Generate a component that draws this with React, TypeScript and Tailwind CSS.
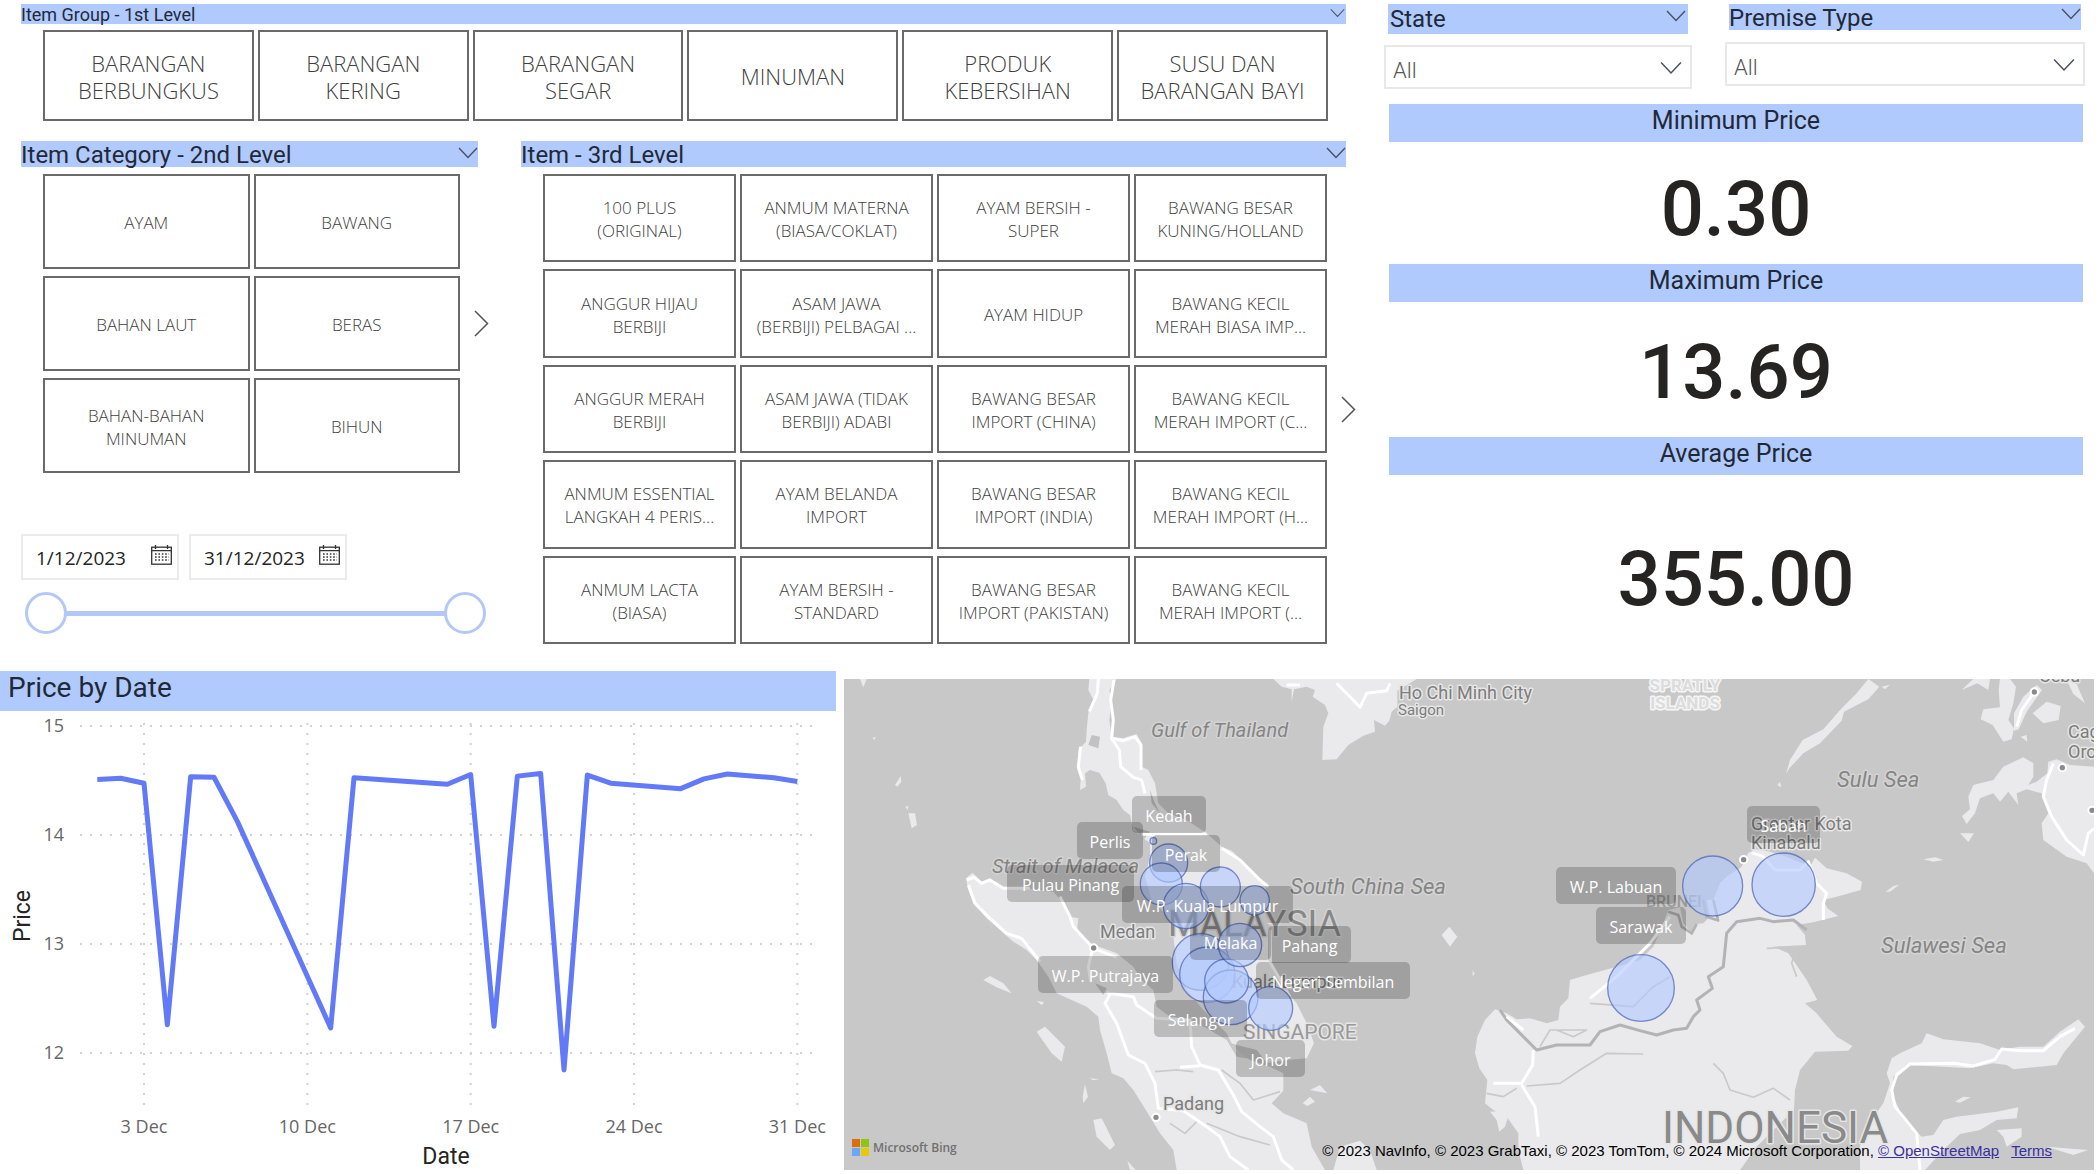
import { useState, type ReactNode } from "react";

const DIN = "font-['Roboto',sans-serif]";
const SEGOE = "font-['Open_Sans','Noto_Sans',sans-serif]";

const GROUPS = [
  "BARANGAN\nBERBUNGKUS",
  "BARANGAN\nKERING",
  "BARANGAN\nSEGAR",
  "MINUMAN",
  "PRODUK\nKEBERSIHAN",
  "SUSU DAN\nBARANGAN BAYI",
];

const CATEGORIES = ["AYAM", "BAWANG", "BAHAN LAUT", "BERAS", "BAHAN-BAHAN\nMINUMAN", "BIHUN"];

const ITEMS = [
  "100 PLUS\n(ORIGINAL)",
  "ANMUM MATERNA\n(BIASA/COKLAT)",
  "AYAM BERSIH -\nSUPER",
  "BAWANG BESAR\nKUNING/HOLLAND",
  "ANGGUR HIJAU\nBERBIJI",
  "ASAM JAWA\n(BERBIJI) PELBAGAI ...",
  "AYAM HIDUP",
  "BAWANG KECIL\nMERAH BIASA IMP...",
  "ANGGUR MERAH\nBERBIJI",
  "ASAM JAWA (TIDAK\nBERBIJI) ADABI",
  "BAWANG BESAR\nIMPORT (CHINA)",
  "BAWANG KECIL\nMERAH IMPORT (C...",
  "ANMUM ESSENTIAL\nLANGKAH 4 PERIS...",
  "AYAM BELANDA\nIMPORT",
  "BAWANG BESAR\nIMPORT (INDIA)",
  "BAWANG KECIL\nMERAH IMPORT (H...",
  "ANMUM LACTA\n(BIASA)",
  "AYAM BERSIH -\nSTANDARD",
  "BAWANG BESAR\nIMPORT (PAKISTAN)",
  "BAWANG KECIL\nMERAH IMPORT (...",
];

function ChevronDown({ className }: { className: string }) {
  return (
    <svg viewBox="0 0 20 12" className={className} fill="none" stroke="#4a5160" strokeWidth="1.4" aria-hidden="true">
      <path d="M1 1 L10 10.5 L19 1" />
    </svg>
  );
}

function NextButton({ label }: { label: string }) {
  return (
    <button type="button" aria-label={label} className="flex w-[15px] shrink-0 items-center">
      <svg viewBox="0 0 15 27" className="h-[27px] w-[15px]" fill="none" stroke="#555" strokeWidth="1.5" aria-hidden="true">
        <path d="M1 1 L13.5 13.5 L1 26" />
      </svg>
    </button>
  );
}

function Header({ children, className, chevron }: { children: ReactNode; className: string; chevron: string }) {
  return (
    <div className={`flex items-start justify-between bg-[#b1cafe] text-[#1f2937] ${DIN} ${className}`}>
      <h2>{children}</h2>
      <button type="button" aria-label="Expand filter">
        <ChevronDown className={chevron} />
      </button>
    </div>
  );
}

function Tile({ label, className }: { label: string; className: string }) {
  return (
    <button
      type="button"
      className={`flex items-center justify-center border-2 border-[#6a6a6a] bg-white pt-0.5 text-center whitespace-pre text-[#404040] ${SEGOE} font-light ${className}`}
    >
      {label}
    </button>
  );
}

function Calendar() {
  return (
    <svg viewBox="0 0 21 20" className="h-5 w-[21px]" fill="none" stroke="#333" strokeWidth="1.3" aria-hidden="true">
      <rect x="0.7" y="2.2" width="19.6" height="17" />
      <path d="M0.7 5.7 H20.3 M4.5 0 V4 M16.5 0 V4" />
      <path d="M4 9 H18 M4 12 H18 M4 15 H18" strokeDasharray="1.6 1.8" strokeWidth="1.5" />
    </svg>
  );
}

function DateBox({ label, value }: { label: string; value: string }) {
  return (
    <div className="flex h-[46px] w-[158px] items-center justify-between border-2 border-[#ebebeb] pr-[5px] pl-[13px]">
      <input
        type="text"
        aria-label={label}
        defaultValue={value}
        className={`w-[108px] bg-transparent pt-0.5 text-[19px] text-[#252423] outline-none ${SEGOE}`}
      />
      <button type="button" aria-label={`Pick ${label.toLowerCase()}`} className="mb-1">
        <Calendar />
      </button>
    </div>
  );
}

const THUMB =
  "pointer-events-none absolute inset-0 m-0 h-[42px] w-full appearance-none bg-transparent outline-none [&::-webkit-slider-thumb]:pointer-events-auto [&::-webkit-slider-thumb]:h-[42px] [&::-webkit-slider-thumb]:w-[42px] [&::-webkit-slider-thumb]:appearance-none [&::-webkit-slider-thumb]:rounded-full [&::-webkit-slider-thumb]:border-[3px] [&::-webkit-slider-thumb]:border-solid [&::-webkit-slider-thumb]:border-[#b3c8f8] [&::-webkit-slider-thumb]:bg-white";

function DateSlicer() {
  const [from, setFrom] = useState(1);
  const [to, setTo] = useState(31);
  return (
    <div className="mt-[61px]">
      <div className="flex gap-2.5">
        <DateBox label="Start date" value="1/12/2023" />
        <DateBox label="End date" value="31/12/2023" />
      </div>
      <div className="relative mt-3 mr-[3px] ml-1 flex h-[42px] items-center px-5">
        <div className="h-[5px] w-full bg-[#b3c8f8]" />
        <input type="range" min={1} max={31} value={from} aria-label="From day" onChange={(e) => setFrom(+e.target.value)} className={THUMB} />
        <input type="range" min={1} max={31} value={to} aria-label="To day" onChange={(e) => setTo(+e.target.value)} className={THUMB} />
      </div>
    </div>
  );
}

function Dropdown({ label }: { label: string }) {
  return (
    <div className="relative">
      <select
        aria-label={label}
        className={`h-[44px] w-full appearance-none border-2 border-[#e8e8e8] bg-white pt-1.5 pl-[7px] text-[22px] text-[#555] ${DIN} font-light`}
      >
        <option>All</option>
      </select>
      <ChevronDown className="pointer-events-none absolute top-4 right-2.5 h-3.5 w-[22px]" />
    </div>
  );
}

function Kpi({ title, value, className }: { title: string; value: string; className: string }) {
  return (
    <section className={DIN}>
      <h2 className="h-[38px] bg-[#b1cafe] text-center text-[25px] leading-[34px] text-[#1f2937]">{title}</h2>
      <p className={`flex items-center justify-center text-[76px] leading-none font-medium text-[#252423] ${className}`}>{value}</p>
    </section>
  );
}

/* Line chart: one day is 70/3 units wide, one price unit is 109 units high. */
const PRICES: [number, number][] = [
  [1, 14.51], [2, 14.52], [3, 14.475], [4, 12.26], [5, 14.535], [6, 14.53], [7, 14.125], [11, 12.23],
  [12, 14.525], [16, 14.465], [17, 14.555], [18, 12.245], [19, 14.54], [20, 14.565], [21, 11.845],
  [22, 14.55], [23, 14.475], [26, 14.425], [27, 14.515], [28, 14.56], [30, 14.525], [31, 14.49],
];
const dayX = (d: number) => 74 + (d * 70) / 3;
const priceY = (p: number) => 15 + (15 - p) * 109;

function PriceChart() {
  const points = PRICES.map(([d, p]) => `${dayX(d)},${priceY(p)}`).join(" ");
  return (
    <svg viewBox="0 0 836 463" className="block h-auto w-full" role="img" aria-label="Price by date">
      <g stroke="#d2d2d2" strokeWidth="2">
        {[15, 14, 13, 12].map((p) => (
          <line key={p} x1="80" x2="814" y1={priceY(p)} y2={priceY(p)} strokeDasharray="2 8" />
        ))}
        {[3, 10, 17, 24, 31].map((d) => (
          <line key={d} y1="12" y2="399" x1={dayX(d)} x2={dayX(d)} strokeDasharray="2 8" />
        ))}
      </g>
      <polyline points={points} fill="none" stroke="#6279f8" strokeWidth="5" strokeLinejoin="round" />
      <g className={SEGOE} fill="#666" fontSize="18">
        {[15, 14, 13, 12].map((p) => (
          <text key={p} x="64" y={priceY(p) + 6} textAnchor="end">{p}</text>
        ))}
        {[3, 10, 17, 24, 31].map((d) => (
          <text key={d} x={dayX(d)} y="422" textAnchor="middle">{d} Dec</text>
        ))}
      </g>
      <g className={DIN} fill="#252423" fontSize="23" textAnchor="middle">
        <text x="446" y="453">Date</text>
        <text transform="translate(30 205) rotate(-90)">Price</text>
      </g>
    </svg>
  );
}

const LAND = [
  "M748 27L745 60L760 90L745 130L740 180L738 215L715 240L712 300L722 330L720 360L738 350L735 310L750 300L778 308L797 340L805 375L830 390L850 420L870 435L880 480L905 500L930 520L930 560L915 620L935 690L985 740L1000 800L1010 880L1040 960L1090 1020L1160 1090L1180 1130L1230 1135L1270 1180L1340 1170L1400 1165L1422 1120L1400 1060L1370 1000L1320 940L1290 880L1295 800L1285 700L1275 640L1215 580L1175 542L1145 530L1100 490L1040 450L985 430L955 400L945 340L925 300L905 290L905 220L890 192L850 205L815 200L808 150L815 100L808 60L830 27Z",
  "M378 625L398 608L425 635L450 625L490 655L560 655L640 665L670 700L690 740L715 745L712 775L745 820L790 835L830 850L880 890L905 930L940 960L950 1010L990 1040L1050 1050L1100 1075L1160 1110L1190 1160L1250 1170L1330 1210L1330 1262L1295 1300L1330 1330L1400 1360L1415 1430L1455 1500L1010 1500L1000 1440L960 1390L930 1340L880 1260L850 1225L815 1210L800 1150L780 1080L775 1040L740 1010L650 970L625 920L590 870L560 840L520 815L480 780L440 745L400 700L385 660Z",
  "M1500 1430L1560 1412L1590 1440L1610 1500L1480 1500Z",
  "M590 1085L615 1070L675 1130L665 1175L635 1150Z M430 930L450 918L490 940L515 970L470 952Z M760 1350L785 1345L825 1425L810 1440L770 1400Z M735 1243L744 1280L730 1300L728 1280Z M205 430L225 430L231 465L215 475Z M590 993L612 996L606 1006Z M862 1472L887 1500L870 1500Z M60 27L80 27L70 52Z M748 1225L778 1227L760 1231Z M165 345L182 318L184 335L172 350Z M97 204L107 200L104 210Z M196 408L206 410L202 420Z",
  "M1300 27L1325 50L1355 58L1355 95L1362 58L1400 50L1425 60L1418 80L1455 105L1465 130L1450 170L1447 270L1490 268L1525 225L1570 197L1605 185L1602 150L1635 167L1648 152L1655 125L1672 110L1672 62L1730 27Z",
  "M1965 1018L1935 1050L1912 1100L1905 1150L1918 1195L1942 1230L1935 1300L1960 1320L2000 1340L2035 1390L2035 1440L2050 1500L2700 1500L2750 1430L2800 1380L2862 1320L2865 1260L2880 1200L2925 1145L3025 1142L3037 1128L2990 1100L2955 1060L2930 1030L2895 1000L2932 990L2900 930L2880 900L2845 850L2800 830L2898 825L2895 795L2870 765L2920 757L2995 738L2962 715L2950 690L2990 680L3062 660L3066 635L3020 610L2960 595L2925 563L2910 590L2840 560L2790 545L2750 538L2725 548L2705 590L2660 620L2640 640L2620 690L2600 690L2610 740L2590 760L2570 762L2555 790L2530 760L2520 712L2485 720L2470 760L2440 830L2400 870L2330 890L2240 915L2190 930L2185 985L2160 1010L2155 1050L2120 1060L2070 1045L2030 1048L2000 1030Z",
  "M1950 1325L1990 1322L2003 1345L1995 1370L1978 1385L1970 1350Z M1805 795L1828 770L1852 800L1830 830Z M1410 1260L1440 1245L1462 1270Z M1388 1300L1410 1280L1425 1295L1402 1308Z M1898 900L1904 912L1898 918Z",
  "M3085 27L3118 50L3085 88L3012 125L3005 152L2940 220L2890 250L2848 295L2838 312L2850 270L2888 210L2950 178L3000 120L3050 70Z M2812 345L2820 335L2824 352Z M3125 50L3150 44L3135 58Z",
  "M3480 27L3476 60L3480 112L3430 118L3422 148L3458 165L3490 215L3515 208L3522 175L3505 150L3520 100L3528 50L3510 27Z M3365 60L3400 27L3450 27L3445 60L3412 40Z M3578 130L3620 95L3662 108L3656 150L3610 160Z M3680 30L3710 42L3735 100L3700 72Z M3542 200L3560 195L3562 215Z",
  "M3522 182L3522 130L3550 80L3590 45L3606 60L3560 125L3536 178Z",
  "M3380 462L3366 438L3390 418L3385 380L3400 345L3460 330L3490 290L3550 262L3580 280L3580 320L3565 345L3590 335L3622 310L3625 275L3650 268L3690 285L3762 290L3762 610L3740 580L3680 560L3610 510L3605 460L3625 430L3605 370L3560 358L3530 370L3535 405L3505 365L3480 395L3460 370L3420 385L3405 430Z",
  "M3360 490L3402 490L3385 516Z M3250 568L3285 562L3310 570L3280 575Z M3137 665L3160 648L3178 644L3150 665Z M3345 1295L3370 1280L3392 1282L3360 1298Z M3470 1380L3545 1375L3545 1400L3500 1430L3490 1400Z M3620 1430L3745 1440L3700 1455Z",
  "M3715 1048L3660 1085L3610 1130L3540 1130L3480 1140L3420 1120L3310 1108L3260 1090L3245 1120L3180 1150L3155 1165L3140 1210L3150 1240L3130 1300L3080 1370L3060 1430L3060 1500L3255 1500L3310 1440L3360 1392L3420 1380L3470 1350L3530 1345L3535 1312L3470 1325L3350 1340L3310 1350L3280 1395L3245 1400L3190 1345L3160 1280L3160 1220L3200 1185L3310 1190L3390 1195L3460 1180L3500 1185L3520 1198L3650 1185L3670 1150L3735 1070Z",
];

const ROADS = [
  "M775 27L772 70L748 125", "M822 30L812 90L820 150L815 205L838 240L842 290L880 322L905 330L915 370",
  "M815 205L850 212L885 200L903 225L903 300", "M722 230L715 290L728 330",
  "M380 630L402 622L425 640L450 630L490 655L570 655", "M385 645L405 700L450 745L500 790L545 805L600 875",
  "M660 680L690 740L700 770L760 835L830 862", "M757 840L745 890L752 935",
  "M812 970L795 1000L830 1060L865 1155L915 1180L945 1240L955 1315L1030 1322L1100 1370L1140 1400L1170 1460L1225 1500",
  "M800 968L880 980L890 1005L950 1045L1050 1050L1055 1130L1080 1185L1135 1200L1180 1275L1205 1325L1260 1370L1300 1400L1325 1470L1360 1500",
  "M1020 1192L1080 1187", "M905 493L1100 493M1145 535L1200 570L1260 630L1285 650", "M1290 780L1292 880L1350 980",
  "M1490 40L1525 75L1560 112L1580 70L1640 62L1650 40M1340 45L1380 45",
  "M2080 1140L2078 1185L2045 1240L1960 1240M2045 1245L2085 1310L2095 1400", "M2250 985L2330 920L2430 820L2490 740", "M2000 1040L2050 1080",
  "M2735 548L2770 560L2805 600L2880 600L2905 575L2930 640L2960 670L2950 700L2950 750",
  "M3530 170L3545 120L3580 70", "M3640 280L3620 330L3610 380L3635 440L3680 510L3730 555L3745 490L3762 475",
  "M3705 1075L3660 1100L3610 1142L3540 1142L3485 1137L3465 1168L3400 1188L3340 1180L3210 1182L3170 1215L3155 1260L3165 1310L3230 1390L3240 1500",
];

const BORDERS =
  "M1980 1020L2000 1050L2050 1100L2090 1140L2150 1125L2250 1125L2280 1085L2340 1065L2400 1082L2450 1095L2500 1080L2540 1075L2560 1040L2580 1020L2570 990L2617 955L2605 920L2650 890L2660 790L2690 755L2760 745L2800 755L2860 750L2900 780";
const RIVERS =
  "M2060 1248L2160 1240L2220 1200L2300 1150L2410 1152M2620 1180L2650 1210L2670 1260L2740 1282L2800 1255L2850 1290M2780 835L2870 830L2855 880L2870 920M945 1205L1010 1200L1060 1205M1145 1200L1200 1240L1240 1290L1320 1265M990 1360L1035 1390L1075 1350M1100 1360L1200 1400L1290 1425M1940 1270L1990 1280L2030 1255M2150 1080L2200 1100L2240 1080L2130 1080L2100 1130M2250 1000L2380 1010L2440 950L2490 920";

const BUBBLES: [number, number, number][] = [
  [940, 513, 10], [986, 579, 57], [964, 642, 63], [1038, 708, 68], [1141, 651, 60], [1244, 691, 44],
  [1082, 876, 85], [1102, 914, 83], [1172, 982, 82], [1160, 933, 66], [1200, 825, 65], [1292, 1015, 66],
  [2618, 648, 90], [2831, 644, 95], [2403, 954, 100],
];

const STATES: [string, number, number, number][] = [
  ["Kedah", 288, 117, 74], ["Perlis", 233, 143, 66], ["Perak", 308, 156, 68], ["Pulau Pinang", 163, 186, 127],
  ["W.P. Kuala Lumpur", 278, 207, 171], ["Melaka", 346, 244, 81], ["Pahang", 424, 247, 83],
  ["Negeri Sembilan", 412, 283, 154], ["W.P. Putrajaya", 194, 277, 135], ["Selangor", 310, 321, 93],
  ["Johor", 392, 361, 69], ["W.P. Labuan", 712, 188, 120], ["Sarawak", 752, 228, 90], ["Sabah", 903, 127, 73],
];

function PriceMap() {
  return (
    <div className="relative mt-2 overflow-hidden bg-[#c8c8c8]">
      <svg viewBox="0 0 1250 491" className="block h-auto w-full" role="img" aria-label="Price by state">
        <g transform="translate(-4 -9) scale(0.33333)">
          <g fill="#eaeaec">
            {LAND.map((d) => <path key={d} d={d} />)}
          </g>
          <path d="M755 195L780 200L775 235L745 225Z M1170 1120L1250 1140L1290 1190L1230 1170Z M930 360L945 400L960 430L935 400Z M880 470L930 485L910 510Z M765 940L800 955L790 975Z" fill="#c2c2c2" />
          <path d={RIVERS} fill="none" stroke="#c9c9cb" strokeWidth="5" strokeLinejoin="round" />
          <path d={BORDERS} fill="none" stroke="#b3b3b3" strokeWidth="9" strokeLinejoin="round" />
          <path d="M2485 725L2515 735L2525 770L2555 790L2570 762M2590 690L2600 740L2630 750M2620 690L2635 755" fill="none" stroke="#b3b3b3" strokeWidth="8" />
          <g fill="none" stroke="#fff" strokeWidth="9" strokeLinejoin="round">
            {ROADS.map((d) => <path key={d} d={d} />)}
          </g>
          <g fill="#8a8a8a" stroke="#fff" strokeWidth="6">
            {[[761, 834], [948, 1342], [2711, 569], [3583, 66], [3667, 293], [3756, 421]].map(([x, y]) => (
              <circle key={x} cx={x} cy={y} r="11" />
            ))}
          </g>
        </g>

        <g className={DIN} fill="#7d7d7d" stroke="#e6e6e6" strokeWidth="3" strokeLinejoin="round" paintOrder="stroke">
          <g fontStyle="italic" fill="#858585" stroke="#d4d4d4" fontSize="20">
            <text x="307" y="58">Gulf of Thailand</text>
            <text x="148" y="194">Strait of Malacca</text>
          </g>
          <g fontStyle="italic" fill="#858585" stroke="#d4d4d4" fontSize="22">
            <text x="446" y="215">South China Sea</text>
            <text x="993" y="108">Sulu Sea</text>
            <text x="1037" y="274">Sulawesi Sea</text>
          </g>
          <g fontSize="18">
            <text x="256" y="259">Medan</text>
            <text x="319" y="431">Padang</text>
            <text x="388" y="309">Kuala Lumpur</text>
            <text x="555" y="20">Ho Chi Minh City</text>
            <text x="907" y="151">Greater Kota</text>
            <text x="907" y="170">Kinabalu</text>
            <text x="1195" y="3">Cebu</text>
            <text x="1224" y="59">Cag</text>
            <text x="1224" y="79">Oro</text>
          </g>
          <text x="554" y="36" fontSize="15">Saigon</text>
          <text x="802" y="228" fontSize="16" fontWeight="500" fill="#999" stroke="none">BRUNEI</text>
          <text x="399" y="360" fontSize="21" fill="#999">SINGAPORE</text>
          <text x="324" y="257" fontSize="36" stroke="#d4d4d4" fill="#888">MALAYSIA</text>
          <text x="818" y="464" fontSize="44" fill="#8a8a8a">INDONESIA</text>
          <g fontSize="17" fontWeight="700" fill="#dcdcdc" stroke="#f6f6f6" textAnchor="middle">
            <text x="841" y="12">SPRATLY</text>
            <text x="841" y="30">ISLANDS</text>
          </g>
        </g>

        <g transform="translate(-4 -9) scale(0.33333)" fill="#b1caff" fillOpacity="0.62" stroke="#4661b4" strokeOpacity="0.7" strokeWidth="4">
          {BUBBLES.map(([x, y, r]) => <circle key={`${x}-${y}`} cx={x} cy={y} r={r} />)}
        </g>

        <g className={SEGOE} fontSize="16" textAnchor="middle">
          {STATES.map(([name, x, y, w]) => (
            <g key={name}>
              <rect x={x} y={y} width={w} height="37" rx="5" fill="#000" fillOpacity="0.2" />
              <text x={x + w / 2} y={y + 26} fill="#fff">{name}</text>
            </g>
          ))}
        </g>
      </svg>

      <div className={`absolute bottom-3.5 left-2 flex items-center gap-1 text-xs font-semibold text-[#707070] ${SEGOE}`}>
        <svg viewBox="0 0 17 17" className="h-[17px] w-[17px]" aria-hidden="true">
          <rect width="8" height="8" fill="#dc6c0c" />
          <rect x="9" width="8" height="8" fill="#8fc414" />
          <rect y="9" width="8" height="8" fill="#6ca6f8" />
          <rect x="9" y="9" width="8" height="8" fill="#e8c80c" />
        </svg>
        Microsoft Bing
      </div>
      <div className="absolute right-[42px] bottom-2 flex gap-3 font-['Liberation_Sans',Arial,sans-serif] text-[15px] whitespace-nowrap text-black">
        <p>
          © 2023 NavInfo, © 2023 GrabTaxi, © 2023 TomTom, © 2024 Microsoft Corporation,{" "}
          <a href="#openstreetmap" className="text-[#3a2fa0] underline">© OpenStreetMap</a>
        </p>
        <a href="#terms" className="text-[#3a2fa0] underline">Terms</a>
      </div>
    </div>
  );
}

export default function App() {
  return (
    <main className="min-h-screen overflow-hidden bg-white">
      <div className="flex gap-7 pt-1 pr-3.5 pl-[21px]">
        <div className="min-w-0 flex-[1335]">
          <Header className="mr-2.5 h-5 text-lg leading-[21px]" chevron="mt-1 mr-px h-2.5 w-[15px]">
            Item Group - 1st Level
          </Header>
          <div className="mt-1.5 mr-7 ml-[22px] grid grid-cols-6 gap-1">
            {GROUPS.map((g) => <Tile key={g} label={g} className="h-[91px] text-[22px] leading-[27px]" />)}
          </div>

          <div className="mt-5 grid grid-cols-[468fr_835fr] gap-8">
            <div className="min-w-0">
              <Header className="mr-[11px] h-[26px] text-2xl leading-[29px]" chevron="mt-1.5 h-3 w-5">
                Item Category - 2nd Level
              </Header>
              <div className="mt-[7px] ml-[22px] flex gap-3.5">
                <div className="grid flex-1 grid-cols-2 gap-x-1 gap-y-[7px]">
                  {CATEGORIES.map((c) => <Tile key={c} label={c} className="h-[95px] text-[17px] leading-[23px]" />)}
                </div>
                <NextButton label="More categories" />
              </div>
              <DateSlicer />
            </div>

            <div className="min-w-0">
              <Header className="mr-2.5 h-[26px] text-2xl leading-[29px]" chevron="mt-1.5 h-3 w-5">
                Item - 3rd Level
              </Header>
              <div className="mt-[7px] ml-[22px] flex gap-3.5">
                <div className="grid h-[470px] flex-1 grid-cols-4 grid-rows-5 gap-x-1 gap-y-[7px]">
                  {ITEMS.map((c) => <Tile key={c} label={c} className="text-[17px] leading-[23px]" />)}
                </div>
                <NextButton label="More items" />
              </div>
            </div>
          </div>
        </div>

        <div className="min-w-0 flex-[701]">
          <div className="grid grid-cols-[308fr_360fr] items-start gap-[33px]">
            <div>
              <Header className="mx-1 h-[30px] pl-0.5 text-2xl leading-[31px]" chevron="mt-1.5 mr-0.5 h-3 w-5">
                State
              </Header>
              <div className="mt-[11px]"><Dropdown label="State" /></div>
            </div>
            <div>
              <Header className="mx-1 h-[26px] text-2xl leading-[29px]" chevron="mt-1 h-3 w-5">
                Premise Type
              </Header>
              <div className="mt-3"><Dropdown label="Premise Type" /></div>
            </div>
          </div>
          <div className="mt-[15px] mr-0.5 ml-[5px]">
            <Kpi title="Minimum Price" value="0.30" className="h-[122px] pt-3" />
            <Kpi title="Maximum Price" value="13.69" className="h-[135px] pt-1" />
            <Kpi title="Average Price" value="355.00" className="h-[196px] pt-3" />
          </div>
        </div>
      </div>

      <div className="flex gap-2 pr-[5px]">
        <section className="min-w-0 flex-[836]">
          <h2 className={`h-10 bg-[#b1cafe] pl-2 text-[28px] leading-[34px] text-[#1f2937] ${DIN}`}>Price by Date</h2>
          <PriceChart />
        </section>
        <section className="min-w-0 flex-[1250]">
          <PriceMap />
        </section>
      </div>
    </main>
  );
}
